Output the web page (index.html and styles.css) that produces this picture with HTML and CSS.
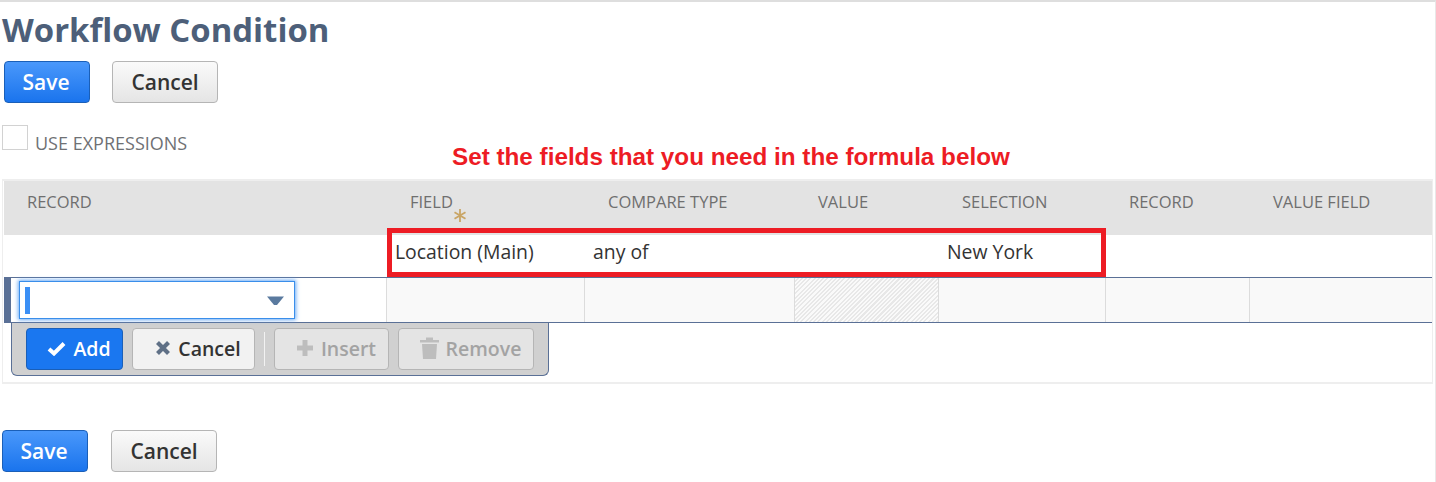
FILE: index.html
```html
<!DOCTYPE html>
<html lang="en">
<head>
    <meta charset="UTF-8">
    <meta name="viewport" content="width=device-width, initial-scale=1.0">
    <title>Workflow Condition</title>
    <link rel="stylesheet" href="styles.css">
</head>
<body>

    <main class="page">
        <h1 class="title">Workflow Condition</h1>

        <div class="actions actions-top">
            <button class="btn btn-primary">Save</button>
            <button class="btn btn-default">Cancel</button>
        </div>

        <div class="expr-row">
            <span class="checkbox"></span>
            <label class="expr-label">USE EXPRESSIONS</label>
        </div>

        <p class="note">Set the fields that you need in the formula below</p>

        <section class="sublist">
            <div class="grid grid-head">
                <div class="head-cell">RECORD</div>
                <div class="head-cell">FIELD
                    <svg class="required" width="14" height="15" viewBox="0 0 14 15">
                        <path d="M7 1v13M1.500 4.200l11 6.600M1.500 10.800l11-6.600" stroke="#c9a565" stroke-width="1.800" fill="none"/>
                    </svg>
                </div>
                <div class="head-cell">COMPARE TYPE</div>
                <div class="head-cell">VALUE</div>
                <div class="head-cell">SELECTION</div>
                <div class="head-cell">RECORD</div>
                <div class="head-cell">VALUE FIELD</div>
            </div>

            <div class="grid grid-row">
                <div class="cell"></div>
                <div class="cell">Location (Main)</div>
                <div class="cell">any of</div>
                <div class="cell"></div>
                <div class="cell">New York</div>
                <div class="cell"></div>
                <div class="cell"></div>
            </div>

            <div class="grid grid-edit">
                <div class="edit-cell edit-first">
                    <div class="select">
                        <span class="caret"></span>
                        <svg width="19" height="11" viewBox="0 0 19 11">
                            <path d="M1 1.500h17L11 10H8z" fill="#5a7a9f"/>
                        </svg>
                    </div>
                </div>
                <div class="edit-cell"></div>
                <div class="edit-cell"></div>
                <div class="edit-cell edit-hatched"></div>
                <div class="edit-cell"></div>
                <div class="edit-cell"></div>
                <div class="edit-cell"></div>
            </div>

            <div class="toolbar">
                <button class="tool tool-add">
                    <svg width="19" height="15" viewBox="0 0 19 15">
                        <path d="M2 8l5 4.500L17 2.500" stroke="#fff" stroke-width="4" fill="none"/>
                    </svg>
                    Add
                </button>
                <button class="tool tool-cancel">
                    <svg width="16" height="16" viewBox="0 0 16 16">
                        <path d="M2.500 2.500l11 11M13.500 2.500l-11 11" stroke="#5f7086" stroke-width="4.200" fill="none"/>
                    </svg>
                    Cancel
                </button>
                <span class="tool-sep"></span>
                <button class="tool tool-off tool-insert">
                    <svg width="18" height="18" viewBox="0 0 18 18">
                        <path d="M9 1v16M1 9h16" stroke="#bdbdbd" stroke-width="5" fill="none"/>
                    </svg>
                    Insert
                </button>
                <button class="tool tool-off tool-remove">
                    <svg width="19" height="22" viewBox="0 0 19 22">
                        <path d="M0 3h19v2.500H0zM6 0.500h7V3H6zM2 7h15l-1 15H3z" fill="#bdbdbd"/>
                    </svg>
                    Remove
                </button>
            </div>

            <div class="highlight"></div>
        </section>

        <div class="actions actions-bottom">
            <button class="btn btn-primary">Save</button>
            <button class="btn btn-default">Cancel</button>
        </div>
    </main>

</body>
</html>
```

FILE: styles.css
```css
* {
    box-sizing: border-box;
    margin: 0;
    padding: 0;
}

body {
    font-family: 'Open Sans', sans-serif;
    background-color: #ffffff;
    color: #333;
    overflow: hidden;
}

.page {
    height: 482px;
    border-top: 2px solid #dedede;
    border-right: 1px solid #e8e8e8;
}

.title {
    font-size: 32.900px;
    font-weight: 700;
    line-height: 42px;
    color: #4d5f79;
    margin: 7px 0 0 2px;
}

.actions {
    display: flex;
}

.actions-top {
    margin: 10px 0 0 4px;
    gap: 22px;
}

.actions-bottom {
    margin: 46px 0 0 2px;
    gap: 23px;
}

.btn {
    height: 42px;
    font-family: inherit;
    font-size: 21px;
    font-weight: 600;
    border-radius: 4px;
}

.btn-primary {
    width: 86px;
    padding-right: 2px;
    color: #fff;
    background: linear-gradient(#4a98fb, #1a74ed);
    border: 1px solid #1a5fb8;
}

.btn-default {
    width: 106px;
    color: #333;
    background: linear-gradient(#fafafa, #e5e5e5);
    border: 1px solid #b5b5b5;
}

.expr-row {
    display: flex;
    margin: 22px 0 0 2px;
    height: 32px;
}

.checkbox {
    width: 26px;
    height: 25px;
    border: 1px solid #d2d2d2;
    background-color: #fff;
}

.expr-label {
    margin: 6px 0 0 7px;
    font-size: 18px;
    line-height: 24px;
    color: #6f7174;
}

.note {
    font-family: 'Liberation Sans', sans-serif;
    font-size: 24.250px;
    font-weight: 700;
    line-height: 26px;
    color: #ed1c24;
    margin: -13px 0 0 452px;
    height: 26px;
}

.sublist {
    position: relative;
    width: 1431px;
    height: 205px;
    margin: 9px 0 0 2px;
    border: 1px solid #eeeeee;
    border-width: 2px 1px;
    padding-left: 1px;
}

.grid {
    display: grid;
    grid-template-columns: 383px 198px 210px 144px 167px 144px 181px;
}

.grid-head {
    height: 54px;
    background-color: #e3e3e3;
}

.head-cell {
    position: relative;
    padding: 10px 0 0 23px;
    font-size: 16.500px;
    line-height: 22px;
    color: #6f6f6f;
}

.required {
    position: absolute;
    left: 66px;
    top: 27px;
}

.grid-row {
    height: 42px;
}

.cell {
    padding-left: 8px;
    font-size: 19.400px;
    line-height: 33px;
    color: #333;
}

.grid-edit {
    height: 46px;
    border-top: 1px solid #5a7096;
    border-bottom: 1px solid #5a7096;
    background-color: #f9f9f9;
}

.edit-cell {
    border-right: 1px solid #dcdcdc;
}

.edit-cell:last-child {
    border-right: none;
}

.edit-first {
    padding: 3px 0 0 15px;
    background: linear-gradient(90deg, #5a7096 7px, #fff 7px);
    background-color: #fff;
}

.edit-hatched {
    background: repeating-linear-gradient(135deg, #fafafa 0 1.500px, #e8e8e8 1.500px 3px);
}

.select {
    display: flex;
    align-items: center;
    justify-content: space-between;
    width: 276px;
    height: 38px;
    padding: 0 9px 0 5px;
    background-color: #fff;
    border: 1.500px solid #3a8eea;
    box-shadow: 0 0 4px 1px #6aaaf5;
}

.caret {
    width: 5px;
    height: 27px;
    background-color: #3b8ff5;
}

.toolbar {
    display: flex;
    align-items: flex-start;
    width: 538px;
    height: 53px;
    margin-left: 7px;
    padding: 5px 0 0 14px;
    background-color: #d0d0d0;
    border: 1px solid #5a7096;
    border-top: none;
    border-radius: 0 0 6px 6px;
}

.tool {
    display: flex;
    align-items: center;
    justify-content: center;
    gap: 7px;
    height: 42px;
    padding: 0 0 2px 9px;
    font-family: inherit;
    font-size: 19.500px;
    font-weight: 600;
    border-radius: 4px;
    border: 1px solid #b5b5b5;
}

.tool-add {
    width: 97px;
    margin-right: 9px;
    color: #fff;
    background-color: #1a77f0;
    border-color: #1a5fb8;
}

.tool-cancel {
    width: 123px;
    color: #333;
    background-color: #f2f2f2;
}

.tool-sep {
    width: 1px;
    height: 34px;
    margin: 4px 9px 0;
    background-color: #f2f2f2;
}

.tool-off {
    color: #a3a3a3;
    background-color: #e4e4e4;
}

.tool-insert {
    width: 115px;
    margin-right: 9px;
}

.tool-remove {
    width: 136px;
}

/* red box from the annotation, lies over the table */
.highlight {
    position: absolute;
    left: 384px;
    top: 47px;
    width: 719px;
    height: 49px;
    border: 5px solid #ed1c24;
}
```
